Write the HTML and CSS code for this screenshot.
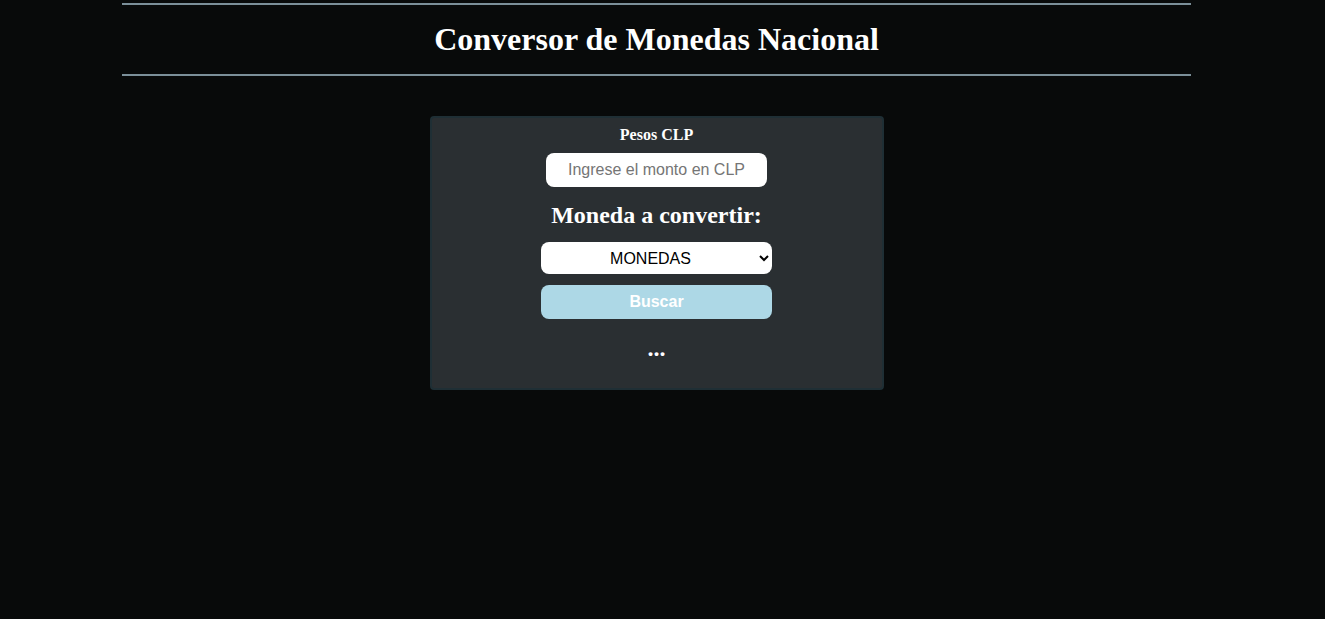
FILE: index.html
```html
<!DOCTYPE html>
<html lang="es">
<head>
    <meta charset="UTF-8">
    <meta name="viewport" content="width=device-width, initial-scale=1.0">
    <title>Conversor de Monedas</title>
    <link rel="stylesheet" href="styles.css">
</head>
<body>
    <div class="page">
        <header class="header">
            <h1>Conversor de Monedas Nacional</h1>
        </header>

        <div class="card">
            <label class="label" for="monto">Pesos CLP</label>
            <input class="input" type="text" inputmode="numeric" id="monto" placeholder="Ingrese el monto en CLP">

            <h2 class="subtitle">Moneda a convertir:</h2>
            <select class="select" id="moneda">
                <option value="">MONEDAS</option>
                <option value="dolar">Dólar</option>
                <option value="euro">Euro</option>
                <option value="uf">UF</option>
            </select>
            <button class="button" id="buscar">Buscar</button>

            <p class="result" id="resultado">...</p>
        </div>
    </div>
</body>
</html>
```

FILE: styles.css
```css
body {
    background-color: #080a0a;
    color: #ffffff;
    font-family: 'Liberation Serif', 'Times New Roman', serif;
    margin: 0;
}

.page {
    width: 1313px;
    padding-top: 3px;
}

.header {
    width: 1069px;
    margin: 0 auto;
    border-top: 2px solid #7b8f99;
    border-bottom: 2px solid #7b8f99;
}

h1 {
    margin: 0;
    padding: 16px 0;
    text-align: center;
    font-size: 32px;
    line-height: 37px;
    font-weight: bold;
}

.card {
    width: 450px;
    margin: 40px auto 0;
    padding: 8px 0 26px;
    background-color: #2a2f32;
    border: 2px solid #1f2f35;
    border-radius: 4px;
    display: flex;
    flex-direction: column;
    align-items: center;
}

.label {
    font-size: 16px;
    font-weight: bold;
    line-height: 18px;
}

.input {
    width: 221px;
    height: 34px;
    margin-top: 9px;
    box-sizing: border-box;
    border: none;
    border-radius: 8px;
    background: #ffffff;
    text-align: center;
    font-family: 'Liberation Sans', Arial, sans-serif;
    font-size: 16px;
    padding: 0 8px;
}

.input::placeholder {
    color: #757575;
}

.subtitle {
    margin: 14px 0 0;
    font-size: 24px;
    line-height: 28px;
    font-weight: bold;
}

.select {
    width: 231px;
    height: 32px;
    margin-top: 13px;
    border: none;
    border-radius: 8px;
    background: #ffffff;
    color: #000000;
    text-align: center;
    font-family: 'Liberation Sans', Arial, sans-serif;
    font-size: 16px;
}

.button {
    width: 231px;
    height: 34px;
    margin-top: 11px;
    border: none;
    border-radius: 8px;
    background-color: #add8e6;
    color: #ffffff;
    font-family: 'Liberation Sans', Arial, sans-serif;
    font-size: 16px;
    font-weight: bold;
    cursor: pointer;
}

.result {
    margin: 16px 0 0;
    font-size: 24px;
    line-height: 27px;
    font-weight: bold;
}
```
